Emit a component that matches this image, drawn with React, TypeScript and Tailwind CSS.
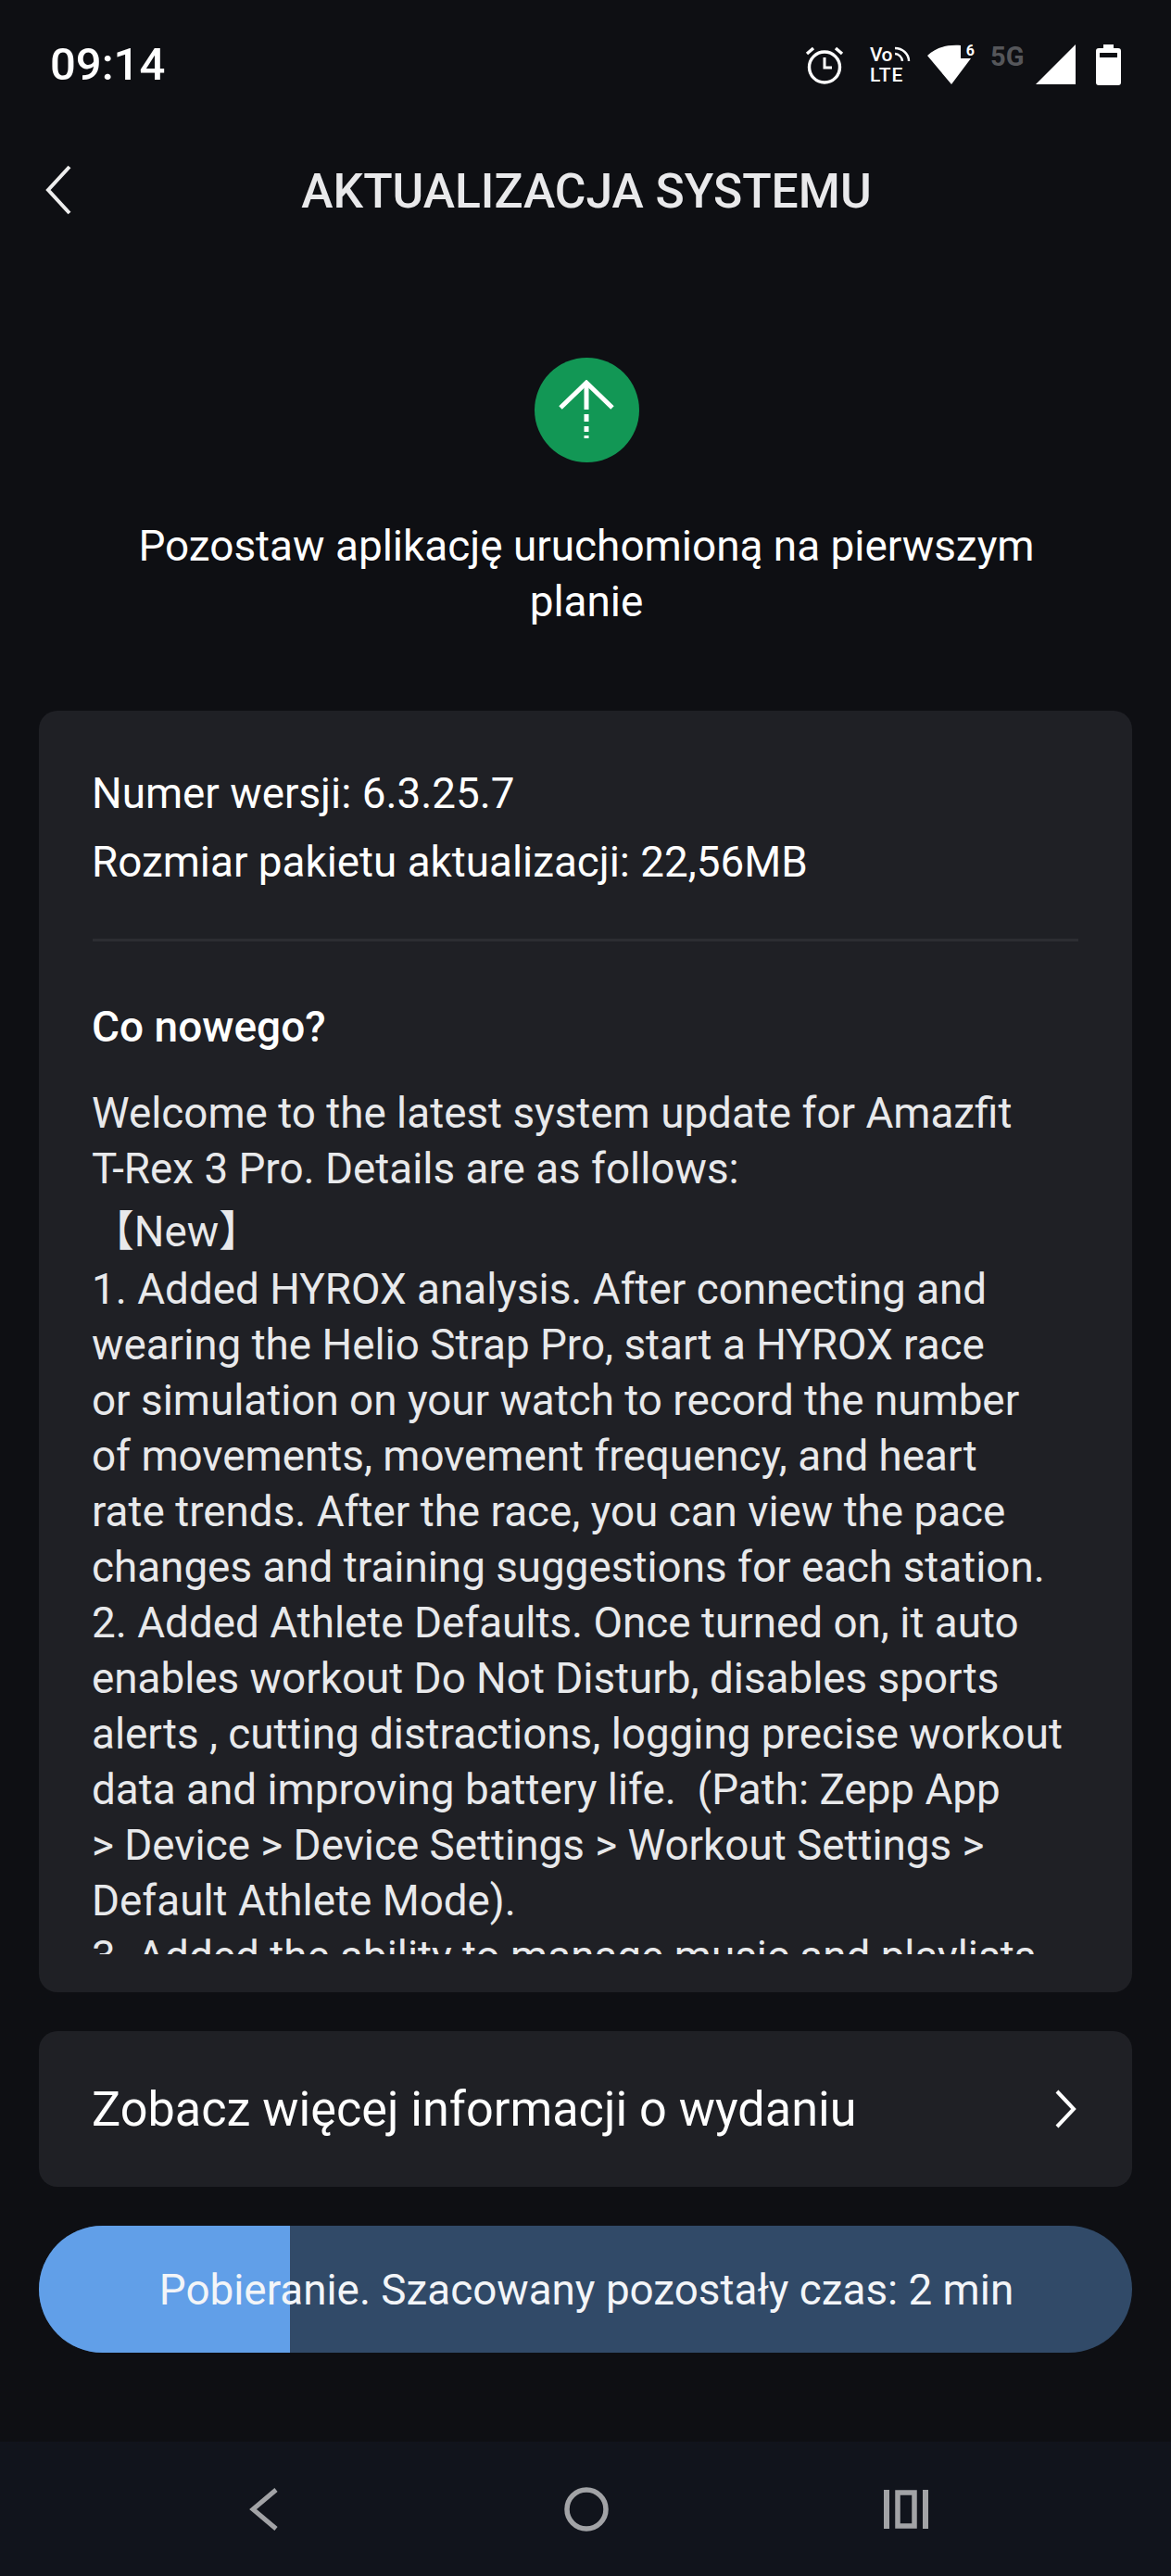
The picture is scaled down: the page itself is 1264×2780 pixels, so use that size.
const releaseNotes = [
  'Welcome to the latest system update for Amazfit',
  'T-Rex 3 Pro. Details are as follows:',
];

const releaseNotesRest = [
  '1. Added HYROX analysis. After connecting and',
  'wearing the Helio Strap Pro, start a HYROX race',
  'or simulation on your watch to record the number',
  'of movements, movement frequency, and heart',
  'rate trends. After the race, you can view the pace',
  'changes and training suggestions for each station.',
  '2. Added Athlete Defaults. Once turned on, it auto',
  'enables workout Do Not Disturb, disables sports',
  'alerts , cutting distractions, logging precise workout',
  'data and improving battery life.  (Path: Zepp App',
  '> Device > Device Settings > Workout Settings >',
  'Default Athlete Mode).',
  '3. Added the ability to manage music and playlists',
];

const StatusIcons = () => (
  <div className="flex items-center">
    {/* alarm */}
    <svg width="42" height="42" viewBox="0 0 42 42" fill="none" stroke="white" strokeWidth="3.4">
      <circle cx="21" cy="23.5" r="16.5" />
      <path d="M21 13v11h8" strokeWidth="3" />
      <path d="M2 9l7-6M40 9l-7-6" />
    </svg>
    {/* volte */}
    <div className="ml-[28px] flex h-[42px] w-[44px] flex-col justify-between text-[21px] leading-[20px] font-medium text-white">
      <div className="flex items-start justify-between">
        <span className="tracking-[-0.5px]">Vo</span>
        <svg width="18" height="16" viewBox="0 0 18 16" fill="none" stroke="white" strokeWidth="2.4" className="mt-[1px]">
          <path d="M1 2c8 0 15 6 15 14" />
          <path d="M1 8c4 0 8 4 8 8" />
        </svg>
      </div>
      <span className="tracking-[1px]">LTE</span>
    </div>
    {/* wifi 6 */}
    <div className="relative ml-[18px] h-[44px] w-[50px]">
      <svg width="50" height="44" viewBox="0 0 50 44" fill="white">
        <path d="M0 12C9 4 19 0 36 1V15H47L26 43Z" />
      </svg>
      <span className="absolute top-[-3px] right-[-1px] text-[16px] leading-[20px] font-bold text-white">6</span>
    </div>
    {/* 5g inactive */}
    <span className="mb-[18px] ml-[18px] w-[41px] text-[29px] leading-[24px] font-bold text-[#55565a]">5G</span>
    {/* signal */}
    <svg width="43" height="43" viewBox="0 0 43 43" fill="white" className="ml-[8px]">
      <path d="M43 0V43H0Z" />
    </svg>
    {/* battery */}
    <svg width="27" height="44" viewBox="0 0 27 44" className="ml-[22px]">
      <path d="M8 0h11v4h5a3 3 0 0 1 3 3v34a3 3 0 0 1-3 3H3a3 3 0 0 1-3-3V7a3 3 0 0 1 3-3h5Z" fill="white" />
      <rect x="4" y="9" width="19" height="5" fill="#0e0f13" />
    </svg>
  </div>
);

export default function App() {
  return (
    <div className="flex h-[2780px] w-[1264px] flex-col overflow-hidden bg-[#0e0f13] font-['Roboto',sans-serif] text-white">
      {/* Status bar */}
      <div className="flex h-[140px] items-center justify-between pr-[54px] pl-[54px]">
        <span className="text-[49px] leading-[60px] font-medium">09:14</span>
        <StatusIcons />
      </div>

      {/* Header */}
      <div className="relative flex h-[130px] items-center justify-center pt-[4px] pl-[2px]">
        <svg width="30" height="54" viewBox="0 0 30 54" fill="none" stroke="#eeeeee" strokeWidth="4" className="absolute top-[38px] left-[48px]">
          <path d="M27 2L4 27l23 25" />
        </svg>
        <h1 className="text-[51.6px] leading-[60px] font-medium text-[#e9e9eb]">AKTUALIZACJA SYSTEMU</h1>
      </div>

      {/* Upgrade icon */}
      <div className="mt-[116px] flex justify-center pl-[2px]">
        <div className="flex h-[113px] w-[113px] items-center justify-center rounded-full bg-[#129755]">
          <svg width="60" height="64" viewBox="0 0 60 64" fill="none" stroke="white" strokeWidth="5">
            <path d="M2 30L30 3l28 27" />
            <path d="M30 3v29" />
            <path d="M30 37v8M30 50v6M30 60v3" />
          </svg>
        </div>
      </div>

      <p className="mt-[60px] pl-[2px] text-center text-[45.9px] leading-[60px]">
        Pozostaw aplikację uruchomioną na pierwszym
        <br />
        planie
      </p>

      {/* Version card */}
      <div className="mx-[42px] mt-[88px] h-[1384px] rounded-[20px] bg-[#1f2025] px-[58px] pt-[53px]">
        <div className="-ml-[1px] text-[45.8px] leading-[74px]">
          <div>Numer wersji: 6.3.25.7</div>
          <div>Rozmiar pakietu aktualizacji: 22,56MB</div>
        </div>
        <div className="mt-[45px] h-[3px] bg-[#2c2d32]" />
        <h2 className="mt-[62px] -ml-[1px] text-[46px] leading-[60px] font-medium">Co nowego?</h2>
        <div className="mt-[34px] -ml-[1px] h-[937px] overflow-hidden text-[45.8px] leading-[60px] whitespace-pre text-[#e8e9eb]">
          {releaseNotes.map((line) => (
            <div key={line}>{line}</div>
          ))}
          <div className="h-[70px] pt-[8px] font-['Roboto','Noto_Sans_CJK_SC',sans-serif]">【New】</div>
          {releaseNotesRest.map((line) => (
            <div key={line}>{line}</div>
          ))}
        </div>
      </div>

      {/* More info row */}
      <div className="mx-[42px] mt-[42px] flex h-[168px] items-center justify-between rounded-[20px] bg-[#1f2025] pr-[60px] pl-[57px]">
        <span className="pt-[2px] text-[52.2px] leading-[60px]">Zobacz więcej informacji o wydaniu</span>
        <svg width="24" height="42" viewBox="0 0 24 42" fill="none" stroke="white" strokeWidth="4">
          <path d="M3 2l18 19L3 40" />
        </svg>
      </div>

      {/* Download progress */}
      <div className="relative mx-[42px] mt-[42px] flex h-[137px] items-center justify-center overflow-hidden rounded-full bg-[#314a68]">
        <div className="absolute inset-y-0 left-0 w-[271px] bg-[#619fe8]" />
        <span className="relative pt-[2px] pl-[2px] text-[45.8px] leading-[60px] text-[#f3f5f8]">Pobieranie. Szacowany pozostały czas: 2 min</span>
      </div>

      {/* Navigation bar */}
      <div className="mt-[96px] flex h-[145px] items-center bg-[#11141c] pl-[268px]">
        <svg width="32" height="46" viewBox="0 0 32 46" fill="none" stroke="#a2a3a6" strokeWidth="5" className="shrink-0">
          <path d="M30 2L5 23l25 21" />
        </svg>
        <svg width="48" height="48" viewBox="0 0 48 48" fill="none" stroke="#a2a3a6" strokeWidth="5.5" className="ml-[309px] shrink-0">
          <circle cx="24" cy="24" r="21" />
        </svg>
        <svg width="48" height="42" viewBox="0 0 48 42" fill="none" stroke="#a2a3a6" strokeWidth="6" className="ml-[297px] shrink-0">
          <path d="M3 0v42M45 0v42" />
          <rect x="15" y="3" width="18" height="36" strokeWidth="5.5" />
        </svg>
      </div>
    </div>
  );
}
